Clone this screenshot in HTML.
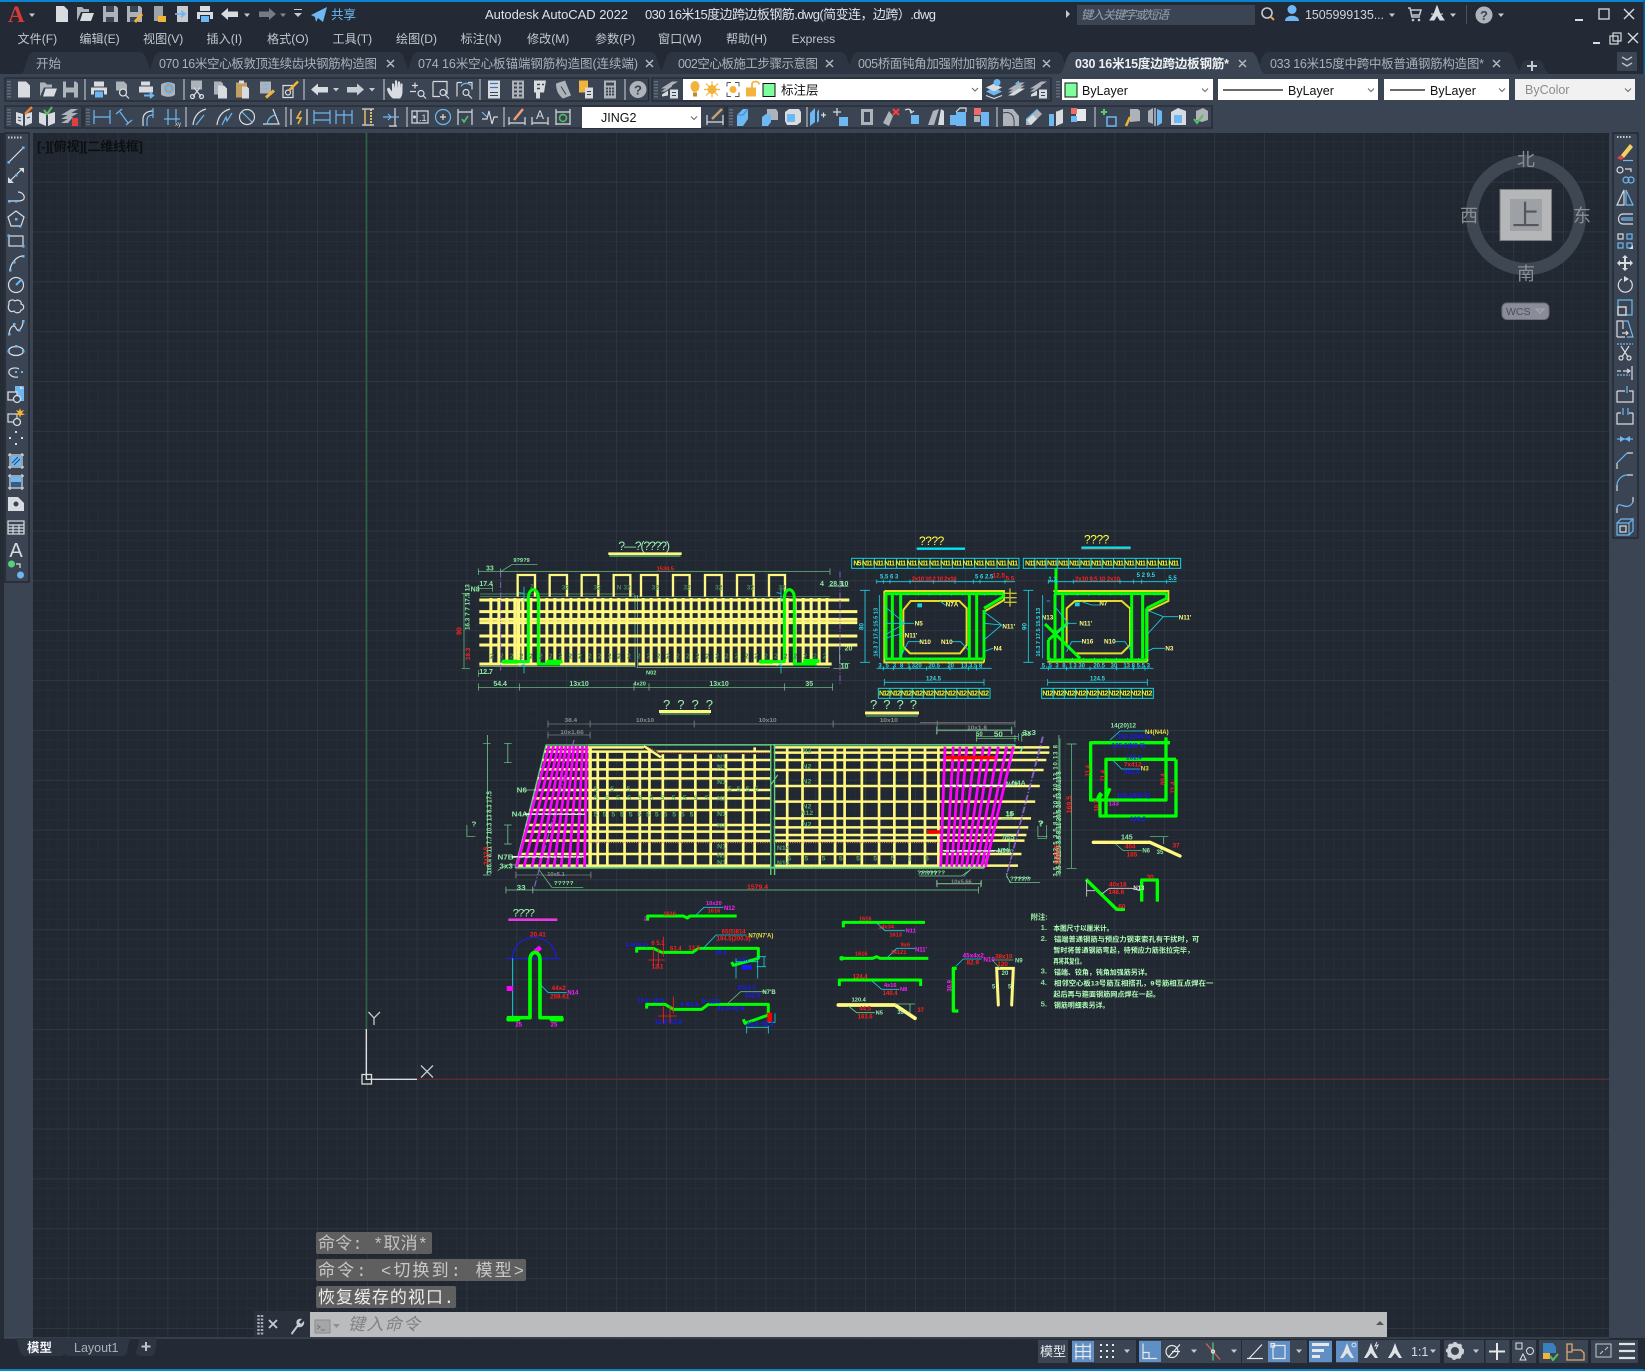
<!DOCTYPE html>
<html><head><meta charset="utf-8"><title>AutoCAD 2022</title>
<style>
html,body{margin:0;padding:0;background:#222933;overflow:hidden}
svg{display:block;font-family:"Liberation Sans","Noto Sans CJK SC",sans-serif}
.w{fill:none;stroke:#d8dce1;stroke-width:1.2}
.b{fill:none;stroke:#6db8f2;stroke-width:1.2}
.fw{fill:#d8dce1}.fb{fill:#6db8f2}.fg{fill:#aeb3ba}.fo{fill:#f2b33d}
.gr{fill:none;stroke:#00ff00;stroke-linejoin:round}
.ye{fill:none;stroke:#fff880}
.di{fill:none;stroke:#72cf8a;stroke-width:2}
.cy{fill:none;stroke:#18d0e0;stroke-width:2.5}
.gy{fill:none;stroke:#77797c;stroke-width:2.5}
.m{fill:#c2c7ce;font-size:12.1px}
.tb{fill:#aab1bb;font-size:12.5px}
</style></head><body>
<svg xmlns="http://www.w3.org/2000/svg" width="1645" height="1371" viewBox="0 0 1645 1371">
<defs>
<pattern id="grid" patternUnits="userSpaceOnUse" x="18.02" y="32.18" width="49.84" height="49.84">
<rect width="49.84" height="49.84" fill="#212831"/>
<path d="M9.97 0V49.84M19.94 0V49.84M29.9 0V49.84M39.87 0V49.84M0 9.97H49.84M0 19.94H49.84M0 29.9H49.84M0 39.87H49.84" stroke="#262d37" stroke-width="1" fill="none"/>
<path d="M0 0V49.84M0 0H49.84" stroke="#333b49" stroke-width="1.4" fill="none"/>
</pattern>
<g id="k"><path d="M-3-1.5h6L0 2z" fill="#c5cad0"/></g>
<g id="v"><path d="M-3-1.5L0 1.5 3-1.5" stroke="#666" fill="none"/></g>
<g id="n"><path class="fw" d="M-6-8h8l4 4V8H-6z"/></g>
<g id="o"><path class="fg" d="M-8 7V-7h5l2 2h5v3H-4z"/><path class="fw" d="M-5 7l2.5-8H9L6 7z"/></g>
<g id="s"><path class="fg" d="M-7-8H6l2 2V8H-7z"/><path fill="#3b4453" d="M-4-8h8v6h-8zM-4 3h8v5h-8z"/></g>
<g id="sa"><use href="#s"/><path d="M1 8L8 0" stroke="#f2b33d" stroke-width="3"/></g>
<g id="pl"><path class="fw" d="M-5-8H5v5H-5zM-8-2H8v7H5V1H-5v4h-3z"/><rect x="-4" y="2" width="8" height="6" class="fb"/></g>
<g id="pv"><path class="fg" d="M-6-8h8l3 3v6H-6z"/><circle cx="1" cy="3" r="3.5" fill="#3b4453" stroke="#d8dce1" stroke-width="1.3"/><path class="w" d="M3.5 5.500l3.500 3.500"/></g>
<g id="pb"><path class="fw" d="M-5-8H4v4h-9zM-7-3H7v6H-7z"/><path class="b" d="M-2 6H6M4 3.500L7 6 4 8.500" style="stroke-width:2"/></g>
<g id="gl"><path class="fg" d="M-7-5C-4-8 5-8 7-5V5C5 8-4 8-7 5z"/><circle r="5.500" cx="1" cy="-1" class="fb"/><circle r="3.500" cx="1" cy="-1" fill="none" stroke="#d98b3a" stroke-width="1.2"/></g>
<g id="cut"><rect x="-6" y="-9" width="11" height="9" class="fg"/><path class="w" d="M-3-2L4 7M3-2L-4 7"/><circle cx="-4.500" cy="7" r="2" class="w"/><circle cx="4.500" cy="7" r="2" class="w"/></g>
<g id="cp"><path class="fg" d="M-6-8H1l2 2V5H-6z"/><path class="fw" d="M-2-4H4l3 3V9H-2z"/></g>
<g id="pt"><rect x="-6" y="-7" width="11" height="15" fill="#c4a060"/><rect x="-3" y="-9" width="5" height="3" class="fw"/><path class="fw" d="M0-3H5l2 2V9H0z"/></g>
<g id="mp"><rect x="-6" y="-8" width="11" height="12" class="fg"/><path class="b" d="M-3-5h5M-3-1h5"/><path d="M0 8L8 1" stroke="#f2b33d" stroke-width="3"/></g>
<g id="bl"><path class="w" d="M-7-4H3V8H-7z"/><circle cx="-2" cy="3" r="2.500" class="w"/><path d="M-1 1L8-8" stroke="#f2b33d" stroke-width="2.500"/></g>
<g id="un"><path class="fw" d="M-9 0L-2-6v3.500H8V3H-2V6z"/></g>
<g id="re"><path class="fw" d="M9 0L2-6v3.500H-8V3H2V6z" opacity=".9"/></g>
<g id="ha"><path class="fw" d="M-3 9C-6 7-9 2-9-1L-7-2-4 2V-6L-2-6-1-1V-9H1L2-1V-8H4L4.500-1V-6H6.500V2C6.500 6 5 8 4 9z"/></g>
<g id="zr"><path class="w" d="M-3-7V-1M-6-4H0M-8 2H-2"/><circle cx="3" cy="4" r="3" class="w"/><path class="w" d="M5 6l3 3"/></g>
<g id="zw"><path class="w" d="M-8-8H6V5M-8-8V7H-1"/><circle cx="2" cy="3" r="3" class="w"/><path class="w" d="M4 5l4 4"/></g>
<g id="zp"><path class="w" d="M-8-7H-3M3-7H7V0M-8-7V7"/><path class="b" d="M-4-3C-2-7 3-7 6-4"/><circle cx="1" cy="3" r="3" class="w"/><path class="w" d="M3 5l4 4"/></g>
<g id="pr"><rect x="-6" y="-9" width="12" height="18" class="fw"/><path class="b" d="M-4-6H4M-4-2H4" style="stroke:#3a77b8"/><path d="M-4 3H4M-4 6H4" stroke="#3b4453"/></g>
<g id="dc"><rect x="-6" y="-9" width="12" height="18" class="fg"/><path d="M-4-6H-1M1-6H4M-4-2H-1M1-2H4M-4 2H-1M1 2H4M-4 6H-1M1 6H4" stroke="#3b4453" stroke-width="2"/></g>
<g id="tl"><path class="fw" d="M-6-9H6L4 3H0V9H-4V3H-6z"/><path d="M-3-5H0M2-5H4M-3-1H0" stroke="#3b4453" stroke-width="1.500"/></g>
<g id="sh"><path class="fg" d="M-7-6L2-9 8 6 0 9 Q-7 4-7-6z"/><path d="M-2-3L3 5" stroke="#3b4453"/></g>
<g id="ma"><rect x="-7" y="-9" width="9" height="12" class="fo"/><rect x="-1" y="-2" width="8" height="11" class="fw"/><path d="M1 2H5M1 5H5" stroke="#3b4453"/></g>
<g id="ca"><rect x="-6" y="-9" width="12" height="18" class="fg"/><rect x="-4" y="-7" width="8" height="3" fill="#3b4453"/><path d="M-4-1H4M-4 2H4M-4 5H4" stroke="#3b4453" stroke-dasharray="2 1" stroke-width="2"/></g>
<g id="he"><circle r="8.500" fill="#aeb3ba"/><text x="0" y="5" font-size="13" font-weight="bold" text-anchor="middle" fill="#3b4453">?</text></g>
<g id="la"><path class="fg" d="M-9-1L2-8H8L-3-1zM-9 2L2-5V-3L-5 2z"/><path class="fw" d="M-8 5L-2 1V6L-8 7z"/><rect x="0" y="0" width="8" height="9" class="fw"/><path d="M2 3H6M2 6H6" stroke="#3b4453"/></g>
<g id="lb"><path class="fb" d="M-8 2L0-2 8 2 0 6z" /><path class="fw" d="M-8-2L0-6 8-2 0 2z"/><circle cx="3" cy="-7" r="3.500" class="fb"/><path d="M-8 6L0 9 8 6" class="w"/></g>
<g id="lc"><path class="fg" d="M-9 0L2-7H8L-3 0z"/><path class="fg" d="M-9 3L2-4H8L-3 3z"/><path class="fb" d="M-2-6L2-9V-4z"/><path class="fw" d="M-9 6L2-1H8L-3 6z"/></g>
<g id="nt"><path class="fw" d="M-8-5L-1-3V9L-8 6zM1-3L8-5V6L1 9z"/><path d="M-6 0L-3 1M-6 3L-3 4M3 1L6 0" stroke="#3b4453"/><path d="M1-3L8-10" stroke="#f08030" stroke-width="2.500"/></g>
<g id="nt2"><path class="fw" d="M-8-5L-1-3V9L-8 6zM1-3L8-5V6L1 9z"/><path d="M-3-7L0-3 5-10" stroke="#55c060" stroke-width="2" fill="none"/></g>
<g id="lr"><path class="fg" d="M-9-2L1-8H8L-2-2zM-9 2L1-4H8L-2 2zM-9 6L1 0H3L-2 6z"/><rect x="2" y="1" width="6" height="8" fill="#e04040"/></g>
<g id="dl"><path class="b" d="M-8-7V7M8-7V7M-8 0H8"/></g>
<g id="da"><path class="b" d="M-8-3L-2-8M2 8L8 3"/><path class="b" d="M-4-5L4 6"/></g>
<g id="dar"><path class="w" d="M-7 9V2C-7-3-3-6 3-6"/><path class="b" d="M-3 9V3C-3 0-1-2 3-2M3-9V1"/></g>
<g id="dor"><path class="b" d="M-4-8V8M4-8V5M-8 2H8"/><text x="3" y="9" font-size="6" fill="#d8dce1">xy</text></g>
<g id="dra"><path class="w" d="M-8 8C-7-1-2-6 5-8"/><path class="b" d="M-5 8L3-2"/></g>
<g id="djo"><path class="w" d="M-8 8C-7-1-2-6 5-8"/><path class="b" d="M-3 8L1 0 2 4 7-4"/></g>
<g id="ddi"><circle r="7.500" class="w"/><path class="b" d="M-5-5L5 5"/></g>
<g id="dan"><path class="w" d="M-8 7H8L2-8"/><path class="b" d="M4-2C0-1-3 2-4 7"/></g>
<g id="dqu"><path class="w" d="M-8-8V8M8-8V8"/><path d="M2-6L-2 1H2L-1 7" stroke="#f2b33d" stroke-width="1.600" fill="none"/></g>
<g id="dba"><path class="b" d="M-8-7V7M8-7V7M-8-4H8M-8 3H8"/></g>
<g id="dco"><path class="b" d="M-8-7V7M0-7V7M8-7V7M-8-2H8"/></g>
<g id="dsp"><path class="w" d="M-6-8H6M-6 8H6"/><path d="M-3-8V8" stroke="#e0c060" stroke-width="1.500"/><path d="M3-8V8" stroke="#e0c060" stroke-width="2" stroke-dasharray="2 1"/></g>
<g id="dbr"><path class="w" d="M4-9V9M-2 9H6"/><path class="b" d="M-8 0H8M-3-3L0 0-3 3"/></g>
<g id="tol"><rect x="-8" y="-6" width="16" height="12" class="w"/><path class="w" d="M-3-6V6"/><circle cx="-5.500" cy="0" r="1.500" class="fw"/><text x="-1" y="4" font-size="9" fill="#d8dce1">.1</text></g>
<g id="cen"><circle r="7.500" class="b"/><path class="w" d="M-3 0H3M0-3V3"/></g>
<g id="ins"><path class="w" d="M-7-8V8M7-8V8M-7-5H7"/><path d="M-3 2L-1 5 3-1" stroke="#55c060" stroke-width="1.600" fill="none"/></g>
<g id="jog"><path class="w" d="M-8 2H-3L-1-6 2 7 4 0H8"/><path class="b" d="M-8-5L-3 0"/></g>
<g id="ded"><path class="w" d="M-8 0V8M8 0V8M-8 6H8"/><path d="M-3 3L6-8" stroke="#f0a070" stroke-width="2.500"/></g>
<g id="dte"><path class="w" d="M-8 0V8M8 0V8M-8 6H8"/><text x="0" y="2" font-size="12" text-anchor="middle" fill="#d8dce1">A</text></g>
<g id="dup"><path class="w" d="M-7-8V8M7-8V8M-7-5H7M-7 7H7"/><circle cx="0" cy="1" r="3.500" fill="none" stroke="#55c060" stroke-width="1.500"/></g>
<g id="dst"><path class="w" d="M-8-2V8M8-2V8M-8 5H8"/><path d="M-3 2L7-8" stroke="#c8a070" stroke-width="2.500"/></g>
<g id="c1"><path class="fb" d="M-8 9V-2L-2-8H3V2L-2 9z"/><path d="M-8-2H-2L3-8" stroke="#3f8bd0" fill="none"/></g>
<g id="c2"><path class="fg" d="M-3-8H6L8-5V3H0L-3 1z"/><path class="fb" d="M-8 9V0L-4-3H1V5L-2 9z"/></g>
<g id="c3"><path class="fw" d="M-4-8H6L8-5V5L4 8H-6L-8 4V-5z"/><rect x="-6" y="-3" width="8" height="8" class="fb"/></g>
<g id="c4"><path class="fb" d="M-8 9V-4L-3-9V5z"/><path class="fb" d="M-1 6V-5L1-8V4z"/><path class="w" d="M3-2H8M5.500-4.500V.5"/></g>
<g id="c5"><path class="w" d="M-8-5H0M-4-9V-1"/><rect x="-2" y="0" width="9" height="9" class="fb"/></g>
<g id="c6"><rect x="-6" y="-8" width="12" height="16" class="fg"/><rect x="-3" y="-5" width="6" height="10" fill="#3b4453"/></g>
<g id="c7"><path class="fg" d="M-8 6L-2-6 2-1-2 9z"/><path d="M2-8L8-2M8-8L2-2" stroke="#ff3b3b" stroke-width="2"/></g>
<g id="c8"><rect x="-1" y="-2" width="8" height="9" class="fb"/><path class="w" d="M-7-7C-3-9 0-7-1-4M-2-7l1 3 3-2"/></g>
<g id="c9"><path class="fg" d="M-8 8L-3-6 3-8-2 8z"/><path class="fw" d="M2 8L5-8 8-6V8z"/></g>
<g id="c10"><rect x="-2" y="-5" width="10" height="14" class="fb"/><rect x="-8" y="-2" width="9" height="10" class="fb"/><path d="M-2-5L2-9H8V-5" class="w"/></g>
<g id="c11"><rect x="-8" y="-9" width="7" height="7" fill="#ef6a6a"/><rect x="-1" y="-5" width="8" height="14" class="fb"/><rect x="-8" y="-1" width="6" height="6" class="fg"/></g>
<g id="c12"><path class="fg" d="M-8-8H2L8-1V9H-8z"/><path d="M-8-4C0-6 4-2 3 9" fill="none" style="stroke:#3b4453"/></g>
<g id="c13"><path class="fg" d="M-8 8V2L3-8 8-3-3 8z"/><path class="fw" d="M-8 2L-2-3 3 2-3 8z"/><path class="fb" d="M-8 2L3-8 4-7-7 3z"/></g>
<g id="c14"><rect x="-8" y="-3" width="5" height="12" class="fb"/><path class="fw" d="M-1 9V-5L6-8V6z"/><path d="M-1-5H6" class="w"/></g>
<g id="c15"><rect x="-3" y="-8" width="10" height="12" fill="#e8eaec"/><rect x="-8" y="-9" width="6" height="6" fill="#ef6a6a"/><rect x="-8" y="-1" width="6" height="6" class="fb"/></g>
<g id="c16"><path d="M-8-5H-2M-5-8V-2" stroke="#55d070" stroke-width="2"/><rect x="-2" y="0" width="9" height="9" fill="none" stroke="#6db8f2" stroke-width="1.500"/></g>
<g id="c17"><path class="fg" d="M-2-8H6L8-6V4L-2 5z"/><path d="M-6 9L-2 0" stroke="#f2b33d" stroke-width="2.500"/></g>
<g id="c18"><path class="fg" d="M-7-6L-2-9V7L-7 5z"/><path class="fb" d="M2-8L7-6V6L2 9z"/><path class="w" d="M0-9V9"/></g>
<g id="c19"><path class="fw" d="M-7-5L0-9 8-6V8H-7z"/><rect x="-4" y="-2" width="8" height="8" class="fb"/></g>
<g id="c20"><path class="fg" d="M-4-6L3-9 8-6V3L2 5-4 3z"/><path d="M-6 2L-3 6 3-2" stroke="#55c060" stroke-width="2" fill="none"/></g>
<g id="l1"><path class="w" d="M-7 7L7-7"/><rect x="-8.500" y="6" width="2.500" height="2.500" class="fb"/><rect x="6" y="-8.500" width="2.500" height="2.500" class="fb"/></g>
<g id="l2"><path class="w" d="M-7 7L7-7"/><path class="fw" d="M3-7H8V-2zM-8 8V2L-2 8z"/><rect x="-1" y="-1" width="2.500" height="2.500" class="fb"/></g>
<g id="l3"><path class="w" d="M-6 4H2C7 4 9 2 8-1S4-5 2-5" /><rect x="-8" y="3" width="2.500" height="2.500" class="fb"/><rect x="-1" y="3" width="2.500" height="2.500" class="fb"/></g>
<g id="l4"><path class="w" d="M0-8L8-2 5 7H-5L-8-2z"/><rect x="-1" y="-1" width="2.500" height="2.500" class="fb"/><rect x="3" y="6" width="2.500" height="2.500" class="fb"/></g>
<g id="l5"><rect x="-7" y="-5" width="14" height="10" class="w"/><rect x="-8.500" y="-6.500" width="2.500" height="2.500" class="fb"/><rect x="6" y="4" width="2.500" height="2.500" class="fb"/></g>
<g id="l6"><path class="w" d="M-6 7C-5 0 0-6 6-7"/><rect x="-7" y="6" width="2.500" height="2.500" class="fb"/><rect x="6" y="-8" width="2.500" height="2.500" class="fb"/><rect x="-3" y="-2" width="2.500" height="2.500" class="fb"/></g>
<g id="l7"><circle r="7.500" class="w"/><path class="b" d="M0 0L5-5" style="stroke-width:2"/><rect x="4" y="-6" width="2.500" height="2.500" class="fb"/></g>
<g id="l8"><path class="w" d="M-7-3C-8-7-3-8-1-6 2-8 6-6 5-3 9-2 8 3 5 3 4 7-1 6-2 4-6 6-9 2-7-3z"/></g>
<g id="l9"><path class="w" d="M-7 6C-6-2-2-4 0 0S3 3 5 0 7-5 7-7"/><rect x="-8" y="5" width="2.500" height="2.500" class="fb"/><rect x="-3" y="-5" width="2.500" height="2.500" class="fb"/><rect x="2" y="1" width="2.500" height="2.500" class="fb"/><rect x="6" y="-8" width="2.500" height="2.500" class="fb"/></g>
<g id="l10"><ellipse rx="7.500" ry="4.500" class="w"/><rect x="-8.500" y="-1" width="2.500" height="2.500" class="fb"/><rect x="6" y="-1" width="2.500" height="2.500" class="fb"/><rect x="-1" y="-6" width="2.500" height="2.500" class="fb"/></g>
<g id="l11"><path class="w" d="M2 5C-4 6-8 2-7-1S0-5 3-3"/><rect x="-1" y="-1" width="2" height="2" class="fb"/><rect x="5" y="-1" width="2" height="2" class="fb"/></g>
<g id="l12"><rect x="-1" y="-9" width="9" height="15" class="fb"/><path class="fw" d="M4-9L8-6H4z"/><rect x="-8" y="-3" width="9" height="8" fill="#3b4453" stroke="#d8dce1" stroke-width="1.300"/><circle cx="1" cy="4" r="3.500" fill="#3b4453" stroke="#d8dce1" stroke-width="1.300"/></g>
<g id="l13"><rect x="-8" y="-3" width="9" height="8" class="w"/><circle cx="1" cy="5" r="3.500" fill="#3b4453" stroke="#d8dce1" stroke-width="1.300"/><path class="fo" d="M4-9L5-6 8-7 6-4 9-2 5-2 4 1 3-2-1-2 2-4 0-7 3-6z"/></g>
<g id="l14"><rect x="-1" y="-7" width="2" height="2" class="fw"/><rect x="-7" y="-1" width="2" height="2" class="fw"/><rect x="5" y="-1" width="2" height="2" class="fw"/><rect x="-1" y="5" width="2" height="2" class="fw"/></g>
<g id="l15"><path class="w" d="M-8-6H8M-8 6H8M-6-8V8M6-8V8"/><rect x="-5" y="-5" width="10" height="10" class="fb"/><path d="M-4 2L2-4M-2 4L4-2" stroke="#1f4a77"/></g>
<g id="l16"><path class="w" d="M-8-6H8M-8 6H8M-6-8V8M6-8V8"/><rect x="-5" y="-5" width="10" height="10" fill="#6db8f2"/><rect x="-5" y="0" width="10" height="5" fill="#3a5a80"/></g>
<g id="l17"><path class="fw" d="M-8-7H2L8-1V7H-8z"/><circle cx="0" cy="0" r="2.500" fill="#3b4453"/></g>
<g id="l18"><rect x="-8" y="-6" width="16" height="13" class="w"/><path class="w" d="M-8-2H8M-8 1H8M-8 4H8M-3-2V7M3-2V7"/></g>
<g id="l19"><text y="9" x="0" text-anchor="middle" font-size="20" fill="#d8dce1">A</text></g>
<g id="l20"><circle cx="-4.500" cy="-6" r="3.500" fill="#55d27a"/><circle cx="4.500" cy="5" r="3.500" class="fb"/><path class="w" d="M0-6H4V-2"/></g>
<g id="r1"><path fill="#f5cf60" d="M-4 3L5-8 8-5-1 6z"/><path d="M-8 6L-4 3-1 6-4 8z" fill="#e04848"/><path class="b" d="M-2 8.500H8"/></g>
<g id="r2"><circle cx="-5" cy="-5" r="3" class="w"/><path class="w" d="M0-6H6V-3"/><circle cx="1" cy="5" r="3" class="b"/><circle cx="6" cy="5" r="3" class="b"/></g>
<g id="r3"><path class="w" d="M-8 7L-1-8V7z"/><path class="b" d="M8 7L1-8V7z"/></g>
<g id="r4"><path class="w" d="M8 5H-2C-8 5-8-5-2-5H8"/><path class="b" d="M8 1H-2C-4 1-4-1-2-1H8"/></g>
<g id="r5"><rect x="-7" y="-7" width="5" height="5" class="w"/><rect x="2" y="-7" width="5" height="5" class="b"/><rect x="-7" y="2" width="5" height="5" class="b"/><rect x="2" y="2" width="5" height="5" class="b"/><path class="fw" d="M8 4V8H4z"/></g>
<g id="r6"><path class="fw" d="M0-8L3-5H1V-1H5V-3L8 0 5 3V1H1V5H3L0 8-3 5H-1V1H-5V3L-8 0-5-3V-1H-1V-5H-3z"/></g>
<g id="r7"><path class="w" d="M-3-6A7 7 0 1 0 5-5"/><path class="fw" d="M-1-9L4-6-1-3z"/></g>
<g id="r8"><rect x="-7" y="-7" width="14" height="15" class="b"/><rect x="-7" y="0" width="8" height="8" fill="#3b4453" stroke="#d8dce1" stroke-width="1.400"/></g>
<g id="r9"><path class="w" d="M-8 8V-8H-2V0M-8 8H0"/><path class="b" d="M-1-8H3L8 8H2"/><path class="w" d="M-3 4H3M1 2L3 4 1 6"/></g>
<g id="r10"><path class="b" stroke-dasharray="2 1" d="M-8-8H8"/><path class="w" d="M-4-6L3 5M4-6L-3 5"/><circle cx="-4" cy="6" r="2" class="w"/><circle cx="4" cy="6" r="2" class="w"/></g>
<g id="r11"><path class="w" d="M7-7V7"/><path class="w" d="M-2-2H5M2-4L5-2 2 0"/><path class="b" stroke-dasharray="2 1" d="M-8 2H5"/><path class="w" d="M-8-2H-4"/></g>
<g id="r12"><path class="w" d="M-8-4H0M4-4H8V7H-8V-4"/><path class="b" d="M2-9V-2"/></g>
<g id="r13"><path class="w" d="M-8-4V7H8V-4M-8-4H-4M4-4H8"/><path class="b" d="M-2-9V-2M3-9V-2"/></g>
<g id="r14"><path class="b" d="M-8 0H8"/><path class="fb" d="M-5-3L0 0-5 3zM5-3L0 0 5 3z"/></g>
<g id="r15"><path class="w" d="M-8 8V2M2-8H8"/><path class="b" d="M-8 2L2-8"/></g>
<g id="r16"><path class="w" d="M-8 8V2M2-8H8"/><path class="b" d="M-8 2C-8-3-3-8 2-8"/></g>
<g id="r17"><path class="w" d="M-8 8V3M8-8V-3"/><path class="b" d="M-8 3C-7-6 2 8 8-3"/></g>
<g id="r18"><path class="b" d="M-8-4H4V8H-8zM4-4L8-8V4L4 8M-8-4L-4-8H8"/><rect x="-5" y="-1" width="6" height="6" class="w"/></g>
</defs>

<rect width="1645" height="1371" fill="#232a35"/>
<rect width="1645" height="2" fill="#0a84cf"/>
<rect y="1369" width="1645" height="2" fill="#0a84cf"/>
<rect x="1643.500" y="0" width="1.500" height="1371" fill="#0a5f96"/>

<!-- title bar -->
<text x="8" y="22" font-size="23" font-weight="bold" fill="#d43a3a" style="font-family:'Liberation Serif',serif">A</text>
<use href="#k" x="32" y="15"/>
<use href="#n" x="62" y="14"/><use href="#o" x="85" y="14"/><use href="#s" x="110" y="14"/><use href="#sa" x="134" y="14"/>
<g transform="translate(159 14)"><rect x="-5" y="-8" width="9" height="15" fill="#9ea3aa"/><rect x="-1" y="2" width="8" height="6" class="fo"/></g>
<g transform="translate(182 14)"><rect x="-5" y="-8" width="11" height="16" fill="#c7cbd0"/><path d="M-7 0H2M-1-3L3 0-1 3" stroke="#6db8f2" stroke-width="1.800" fill="none"/></g>
<use href="#pl" x="205" y="14"/><use href="#un" x="230" y="14"/><use href="#k" x="247" y="15"/>
<use href="#re" x="267" y="14" opacity=".5"/><use href="#k" x="283" y="15" opacity=".6"/>
<path d="M294 13h8l-4 4z" fill="#c5cad0" stroke="none"/><path d="M294 9.500h8" stroke="#c5cad0"/>
<path d="M311 15L327 7 323 22 318 18 316 22 315 17z" fill="#6db8f2"/>
<text x="331" y="19" font-size="12.500" fill="#6db8f2" textLength="25">共享</text>
<text x="485" y="19" font-size="13" fill="#dfe3e8" textLength="143">Autodesk AutoCAD 2022</text>
<text x="645" y="19" font-size="13" fill="#dfe3e8" textLength="291">030 16米15度边跨边板钢筋.dwg(简变连，边跨）.dwg</text>
<path d="M1066 10v8l4-4z" fill="#c5cad0"/>
<rect x="1077" y="5" width="178" height="20" fill="#3b4453"/>
<text x="1081" y="19" font-size="12" font-style="italic" fill="#9aa2ae" textLength="88">键入关键字或短语</text>
<circle cx="1267" cy="13" r="5" fill="none" stroke="#c5cad0" stroke-width="1.600"/><path d="M1270.500 16.500L1274 20" stroke="#e0a050" stroke-width="2"/>
<circle cx="1292" cy="9.500" r="4.500" fill="#6db8f2"/><path d="M1285 21C1285 14 1299 14 1299 21z" fill="#6db8f2"/>
<text x="1305" y="19" font-size="12.500" fill="#d0d5db" textLength="79">1505999135...</text>
<use href="#k" x="1392" y="15"/>
<path d="M1408 8h2l2 9h8M1411 10h10l-1.500 5h-7" fill="none" stroke="#c5cad0" stroke-width="1.500"/><circle cx="1413" cy="20" r="1.300" fill="#c5cad0"/><circle cx="1419" cy="20" r="1.300" fill="#c5cad0"/>
<path d="M1437 6l3 8 4 6h-4l-3-5-3 5h-4l4-6zM1431 14h12" fill="#d8dce1" stroke="#d8dce1"/><use href="#k" x="1453" y="15"/>
<rect x="1466" y="5" width="1" height="19" fill="#4a5362"/>
<use href="#he" x="1484" y="15"/><use href="#k" x="1501" y="15"/>
<path d="M1575 20h8" stroke="#d8dce1" stroke-width="2"/><rect x="1599" y="9" width="10" height="10" fill="none" stroke="#d8dce1" stroke-width="1.300"/><path d="M1624 9l10 10M1634 9l-10 10" stroke="#d8dce1" stroke-width="1.400"/>

<!-- menu -->
<text class="m" x="17.500" y="43">文件(F)</text><text class="m" x="79.400" y="43">编辑(E)</text><text class="m" x="143" y="43">视图(V)</text><text class="m" x="206.500" y="43">插入(I)</text><text class="m" x="267" y="43">格式(O)</text><text class="m" x="332.500" y="43">工具(T)</text><text class="m" x="396" y="43">绘图(D)</text><text class="m" x="460.500" y="43">标注(N)</text><text class="m" x="527" y="43">修改(M)</text><text class="m" x="595" y="43">参数(P)</text><text class="m" x="658" y="43">窗口(W)</text><text class="m" x="726" y="43">帮助(H)</text><text class="m" x="791.500" y="43">Express</text>
<path d="M1593 43h7" stroke="#d8dce1" stroke-width="2"/><rect x="1610" y="36" width="8" height="8" fill="none" stroke="#d8dce1" stroke-width="1.200"/><rect x="1613" y="33" width="8" height="8" fill="none" stroke="#d8dce1" stroke-width="1.200"/><path d="M1628 33l10 10M1638 33l-10 10" stroke="#d8dce1" stroke-width="1.400"/>

<!-- toolbars bg -->
<rect y="74" width="1645" height="59" fill="#3b4453"/>
<!-- tabs -->
<g fill="#2d3542">
<path d="M20 74C26 74 26 52 34 52H140C148 52 148 74 154 74z"/>
<path d="M146 74C152 74 152 52 160 52H398C406 52 406 74 412 74z"/>
<path d="M404 74C410 74 410 52 418 52H651C659 52 659 74 665 74z"/>
<path d="M658 74C664 74 664 52 672 52H841C849 52 849 74 855 74z"/>
<path d="M844 74C850 74 850 52 858 52H1057C1065 52 1065 74 1071 74z"/>
<path d="M1254 74C1260 74 1260 52 1268 52H1508C1515 52 1516 74 1524 74z"/>
<path d="M1519 74C1521 66 1522 60 1526 60H1538C1544 60 1544 72 1548 72V74z"/>
</g>
<path d="M1059 74C1065 74 1065 52 1073 52H1251C1259 52 1259 74 1265 74z" fill="#3b4453"/>
<rect x="1617" y="52" width="20" height="19" fill="#3b4453"/>
<path d="M1622 57l5 3 5-3M1622 63l5 3 5-3" fill="none" stroke="#b8bdc4" stroke-width="1.500"/>
<path d="M1532 61v10M1527 66h10" stroke="#c5cad0" stroke-width="2"/>
<text class="tb" x="36" y="68">开始</text>
<text class="tb" x="159" y="68" textLength="218">070 16米空心板敦顶连续齿块钢筋构造图</text>
<text class="tb" x="418" y="68" textLength="220">074  16米空心板锚端钢筋构造图(连续端)</text>
<text class="tb" x="678" y="68" textLength="140">002空心板施工步骤示意图</text>
<text class="tb" x="858" y="68" textLength="178">005桥面钝角加强附加钢筋构造图</text>
<text x="1075" y="68" font-size="12.500" font-weight="bold" fill="#eef1f4" textLength="154">030 16米15度边跨边板钢筋*</text>
<text class="tb" x="1270" y="68" textLength="214">033 16米15度中跨中板普通钢筋构造图*</text>
<g stroke="#b3b8bf" stroke-width="1.500"><path d="M387 60l7 7M394 60l-7 7M646 60l7 7M653 60l-7 7M826 60l7 7M833 60l-7 7M1043 60l7 7M1050 60l-7 7M1239 60l7 7M1246 60l-7 7M1493 60l7 7M1500 60l-7 7"/></g>

<!-- toolbar groups -->
<g fill="none" stroke="#242b35" stroke-width="1.300">
<rect x="5" y="78" width="643.500" height="23"/><rect x="652" y="78" width="399" height="23"/>
<rect x="5" y="106" width="77" height="22"/><rect x="84" y="106" width="641" height="22"/><rect x="727" y="106" width="485" height="22"/>
</g>
<g stroke="#d0d4d9" stroke-width="1"><path d="M85 79v21M184 79v21M304 79v21M384 79v21M480 79v21M625 79v21M186 107v20M286 107v20M407 107v20M504 107v20M807 107v20M997 107v20M1095 107v20"/></g>
<path d="M8 81v18M10 81v18M655 81v18M657 81v18M1057 81v18M1059 81v18M8 109v16M10 109v16M87 109v16M89 109v16M730 109v16M732 109v16" stroke="#8c94a0" stroke-dasharray="1.500 1.500"/>
<!-- row 1 -->
<g transform="translate(0 89.500)">
<use href="#n" x="24"/><use href="#o" x="48"/><use href="#s" x="70"/><use href="#pl" x="99"/><use href="#pv" x="122"/><use href="#pb" x="146"/><use href="#gl" x="168"/>
<use href="#cut" x="197"/><use href="#cp" x="220"/><use href="#pt" x="242"/><use href="#mp" x="266"/><use href="#bl" x="290"/>
<use href="#un" x="320"/><use href="#k" x="336"/><use href="#re" x="355"/><use href="#k" x="372"/>
<use href="#ha" x="396"/><use href="#zr" x="418"/><use href="#zw" x="441"/><use href="#zp" x="465"/>
<use href="#pr" x="494"/><use href="#dc" x="518"/><use href="#tl" x="540"/><use href="#sh" x="563"/><use href="#ma" x="586"/><use href="#ca" x="610"/><use href="#he" x="638"/><use href="#la" x="670"/>
<use href="#lb" x="994"/><use href="#lc" x="1017"/><use href="#la" x="1039"/>
</g>
<rect x="683" y="79" width="299" height="21" fill="#fff"/>
<g transform="translate(0 89.500)">
<ellipse cx="695" cy="-3" rx="4.500" ry="5.500" class="fo"/><rect x="693" y="3" width="4" height="4" fill="#c08a20"/>
<circle cx="712" r="4.500" class="fo"/><path d="M712-8V8M704 0H720M706-6L718 6M718-6L706 6" stroke="#f2b33d" stroke-width="1.200"/>
<path d="M727-7H731M735-7H739V-3M727-7V-3M727 3V7H731M739 3V7H735" fill="none" stroke="#555" /><circle cx="733" r="3.500" class="fo"/>
<rect x="746" y="-2" width="10" height="9" class="fo"/><path d="M752-2V-5C752-9 759-9 759-5" fill="none" stroke="#f2b33d" stroke-width="1.800"/>
<rect x="763" y="-6" width="12" height="13" fill="#7dff9d" stroke="#111"/>
<text x="781" y="5" font-size="12.500" fill="#111">标注层</text>
<use href="#v" x="975" y="0"/>
</g>
<rect x="1062" y="79" width="151" height="21" fill="#fff"/><rect x="1218" y="79" width="160" height="21" fill="#fff"/><rect x="1384" y="79" width="125" height="21" fill="#fff"/><rect x="1515" y="79" width="120" height="21" fill="#f1f1f1"/>
<rect x="1065" y="83" width="12" height="14" fill="#7dff9d" stroke="#111"/>
<text x="1082" y="95" font-size="12.500" fill="#111">ByLayer</text>
<path d="M1223 90h60M1390 90h35" stroke="#111" stroke-width="1.200"/>
<text x="1288" y="95" font-size="12.500" fill="#111">ByLayer</text>
<text x="1430" y="95" font-size="12.500" fill="#111">ByLayer</text>
<text x="1525" y="94" font-size="12.500" fill="#8c8c8c">ByColor</text>
<use href="#v" x="1205" y="90"/><use href="#v" x="1371" y="90"/><use href="#v" x="1502" y="90"/><use href="#v" x="1628" y="90"/>
<!-- row 2 -->
<g transform="translate(0 117)">
<use href="#nt" x="24"/><use href="#nt2" x="47"/><use href="#lr" x="70"/>
<use href="#dl" x="102"/><use href="#da" x="124"/><use href="#dar" x="150"/><use href="#dor" x="172"/>
<use href="#dra" x="201"/><use href="#djo" x="225"/><use href="#ddi" x="247"/><use href="#dan" x="271"/>
<use href="#dqu" x="299"/><use href="#dba" x="322"/><use href="#dco" x="344"/><use href="#dsp" x="368"/><use href="#dbr" x="391"/>
<use href="#tol" x="420"/><use href="#cen" x="443"/><use href="#ins" x="465"/><use href="#jog" x="490"/>
<use href="#ded" x="517"/><use href="#dte" x="540"/><use href="#dup" x="563"/><use href="#dst" x="715"/>
<use href="#c1" x="745"/><use href="#c2" x="770"/><use href="#c3" x="793"/><use href="#c4" x="818"/><use href="#c5" x="841"/><use href="#c6" x="867"/><use href="#c7" x="891"/><use href="#c8" x="912"/><use href="#c9" x="936"/><use href="#c10" x="958"/><use href="#c11" x="982"/>
<use href="#c12" x="1011"/><use href="#c13" x="1034"/><use href="#c14" x="1057"/><use href="#c15" x="1079"/>
<use href="#c16" x="1109"/><use href="#c17" x="1132"/><use href="#c18" x="1155"/><use href="#c19" x="1178"/><use href="#c20" x="1200"/>
</g>
<rect x="582" y="107" width="119" height="21" fill="#fff"/>
<text x="601" y="122" font-size="12.500" fill="#111">JING2</text><use href="#v" x="694" y="118"/>

<!-- side strips -->
<rect x="0" y="133" width="4" height="1205" fill="#252c36"/>
<rect x="4" y="133" width="29" height="1205" fill="#3b4453"/>
<rect x="1609" y="133" width="36" height="1205" fill="#3b4453"/>
<rect x="5" y="133" width="24" height="449" fill="#3b4453" stroke="#20262f" stroke-width="1.300"/>
<rect x="1613" y="133" width="25" height="405" fill="#3b4453" stroke="#20262f" stroke-width="1.300"/>
<path d="M8 137.500h14M1617 137h14" stroke="#c5cad0" stroke-width="2" stroke-dasharray="1.500 1.500"/>
<g transform="translate(16 0)"><use href="#l1" y="155"/><use href="#l2" y="175"/><use href="#l3" y="197"/><use href="#l4" y="219"/><use href="#l5" y="241"/><use href="#l6" y="263"/><use href="#l7" y="285"/><use href="#l8" y="307"/><use href="#l9" y="328"/><use href="#l10" y="351"/><use href="#l11" y="372"/><use href="#l12" y="395"/><use href="#l13" y="417"/><use href="#l14" y="438"/><use href="#l15" y="461"/><use href="#l16" y="482"/><use href="#l17" y="504"/><use href="#l18" y="527"/><use href="#l19" y="548"/><use href="#l20" y="570"/></g>
<g transform="translate(1625 0)"><use href="#r1" y="152"/><use href="#r2" y="175"/><use href="#r3" y="198"/><use href="#r4" y="219"/><use href="#r5" y="241"/><use href="#r6" y="263"/><use href="#r7" y="285"/><use href="#r8" y="307"/><use href="#r9" y="329"/><use href="#r10" y="352"/><use href="#r11" y="373"/><use href="#r12" y="395"/><use href="#r13" y="417"/><use href="#r14" y="439"/><use href="#r15" y="461"/><use href="#r16" y="483"/><use href="#r17" y="505"/><use href="#r18" y="527"/></g>

<!-- canvas -->
<rect x="33" y="133" width="1576" height="1205" fill="url(#grid)"/>
<path d="M366.300 133V1029" stroke="#2b6a3d" stroke-width="1.300"/>
<path d="M417 1079.300H1609" stroke="#5c2c33" stroke-width="1.300"/>
<text x="37" y="151" font-size="13" font-weight="bold" fill="#0c0f14" textLength="106">[-][俯视][二维线框]</text>

<!-- UCS -->
<path d="M366.300 1029V1079.300H417" fill="none" stroke="#dcdcdc" stroke-width="1.400"/>
<rect x="362" y="1074.500" width="9.500" height="9.500" fill="none" stroke="#dcdcdc" stroke-width="1.300"/>
<path d="M368.500 1012L374 1018 380 1012M374 1018V1025M421 1065.500L433 1077.500M433 1065.500L421 1077.500" fill="none" stroke="#c8c8c8" stroke-width="1.300"/>

<!-- navcube -->
<circle cx="1526" cy="215" r="54" fill="none" stroke="#3f4752" stroke-width="12.500"/>
<rect x="1500" y="189.500" width="51.500" height="51" fill="#b5b6b8" stroke="#7c7c7c"/>
<rect x="1510" y="199" width="32" height="32" fill="#9da1a5"/>
<text x="1526" y="225" font-size="28" text-anchor="middle" fill="#54585c">上</text>
<g font-size="18" fill="#8b8e92" text-anchor="middle"><text x="1526" y="166">北</text><text x="1526" y="280">南</text><text x="1469" y="222">西</text><text x="1582" y="222">东</text></g>
<rect x="1502" y="303" width="47" height="16.500" rx="5" fill="#8a8c99" stroke="#6c6e78"/>
<text x="1506" y="315" font-size="10.500" fill="#4b4d56">WCS</text><path d="M1536 309h8l-4 4z" fill="none" stroke="#a8aab4"/>

<!-- Drawing A -->
<g transform="translate(450 530) scale(.33333)" font-weight="bold">
<text x="505" y="60" font-size="36" font-weight="normal" fill="#9cf0b0" textLength="155">?—?(????)</text>
<path d="M475 71H695" class="ye" stroke-width="8"/><path d="M478 78H692" stroke="#5fc47a" stroke-width="4"/>
<path class="di" d="M152 125L185 104H262M85 125H1140M85 115V135M1140 115V135M152 115V135M85 175H128M85 165V185M128 165V185M42 190V415M35 190H60M35 415H60M85 472H1148M85 460V482M208 460V482M552 460V482M597 460V482M1003 460V482M1148 460V482M85 430H122M85 420V440M1135 170H1195M1168 350V400H1200M1150 415H1195" />
<g fill="#8de8a4" font-size="21"><text x="190" y="96" font-size="17">9?9?9</text><text x="108" y="122">33</text><text x="88" y="168">17.4</text><text x="62" y="185">N8</text><text x="130" y="468">54.4</text><text x="358" y="468">13x10</text><text x="550" y="466" font-size="17">4x20</text><text x="778" y="468">13x10</text><text x="1066" y="468">35</text><text x="88" y="432">12.7</text><text x="588" y="433" font-size="17">N02</text><text x="1110" y="168">4</text><text x="1138" y="168">28.5</text><text x="1172" y="168">10</text><text x="1184" y="362">20</text><text x="1172" y="415">10</text>
<text font-size="19" transform="translate(58 300) rotate(-90)">16.3  7  7  17.5  13</text></g>
<path d="M90 200H1140M90 192H555" stroke="#72cf8a" stroke-width="2" opacity=".7"/>
<path d="M88 410H555M560 412H1140M555 195V412M562 195V412" stroke="#8fd8a0" stroke-width="2"/>
<g stroke="#fff880" fill="none" stroke-width="9">
<line x1="118" x2="535" y1="305" y2="305" stroke-width="202" stroke-dasharray="9 15"/>
<line x1="575" x2="1135" y1="305" y2="305" stroke-width="202" stroke-dasharray="9 15"/>
<path d="M88 210H1198M88 245H1222M88 268H1222M88 278H1222M88 318H1222M88 345H1222M88 402H555M565 402H1145"/>
<path d="M203 200V135H255V200M299 200V135H351V200M395 200V135H445V200M491 200V135H541V200M573 200V135H623V200M669 200V135H719V200M765 200V135H815V200M861 200V135H911V200M957 200V135H1005V200" stroke-width="7"/>
<path d="M205 205V402" stroke-width="12"/>
</g>
<path d="M165 395H235V205C235 170 265 170 265 205V402H330M935 395H1003V205C1003 170 1033 170 1033 205V402H1100" class="gr" stroke-width="9"/>
<path d="M160 395H200M295 395H332M932 395H965M1065 393H1103" stroke="#00ff00" stroke-width="12" stroke-linecap="round"/>
<path d="M152 125V425M1170 125V465" stroke="#8a5fc0" stroke-width="3" stroke-dasharray="18 5 3 5"/>
<path d="M222 170V215M222 390V430M993 170V215M993 390V430M207 188L220 190M980 188L992 190M208 408L222 404M980 408L992 404" class="cy"/>
<text x="620" y="122" font-size="17" fill="#ff2020">1534.5</text>
<text font-size="21" fill="#ff2020" transform="translate(35 315) rotate(-90)">90</text>
<text font-size="19" fill="#ff2020" transform="translate(60 390) rotate(-90)">16.3</text>
<g fill="#3d8a50" font-size="20"><text x="240" y="175">2</text><text x="335" y="178">32</text><text x="430" y="178">32</text><text x="500" y="178">N 32</text><text x="605" y="178">32</text><text x="700" y="178">32</text><text x="795" y="178">32</text><text x="890" y="178">32</text><text x="985" y="178">32</text>
<text x="120" y="385" font-size="21" textLength="1010">2 2 2 2 2 2 2 2 2 2 2 2 2 2 2 2 2 2 2 2 2 2 2 2 2 2 2 2 2 2 2 2 2 2 2</text></g>
</g>
<g fill="#9cf0b0" font-size="13"><text x="663" y="709" textLength="50">? ? ? ?</text><text x="870" y="709" textLength="47">? ? ? ?</text></g>
<path d="M659 711.500H711M865 713H919" stroke="#fff880" stroke-width="3"/><path d="M660 714H710M866 716H918" stroke="#5fc47a"/>

<!-- Section B -->
<g transform="translate(840 525) scale(.33333)" font-weight="bold">
<text x="237" y="60" font-size="36" font-weight="normal" fill="#ffff40" textLength="76">????</text>
<text x="732" y="56" font-size="36" font-weight="normal" fill="#ffff40" textLength="76">????</text>
<path d="M230 71H375M724 68H872" stroke="#00e8f0" stroke-width="7"/><path d="M724 73H872" stroke="#e02020" stroke-width="2"/>
<g fill="#152a30" stroke="#18d0e0" stroke-width="3">
<rect x="35" y="100" width="502" height="30"/><rect x="550" y="100" width="472" height="30"/><rect x="115" y="490" width="335" height="30"/><rect x="605" y="490" width="335" height="30"/></g>
<g stroke="#18d0e0" stroke-width="30"><line x1="68" x2="537" y1="115" y2="115" stroke-dasharray="3 30.470"/><line x1="583" x2="1022" y1="115" y2="115" stroke-dasharray="3 30.700"/><line x1="148" x2="450" y1="505" y2="505" stroke-dasharray="3 30.500"/><line x1="638" x2="940" y1="505" y2="505" stroke-dasharray="3 30.500"/></g>
<g fill="#f5f528" font-size="21" font-weight="bold">
<text x="40" y="122" textLength="494">N5 N11 N11 N11 N11 N11 N11 N11 N11 N11 N11 N11 N11 N11 N11</text>
<text x="555" y="122" textLength="462">N11 N11 N11 N11 N11 N11 N11 N11 N11 N11 N11 N11 N11 N11</text>
<text x="117" y="512" textLength="330">N12 N12 N12 N12 N12 N12 N12 N12 N12 N12</text>
<text x="607" y="512" textLength="330">N12 N12 N12 N12 N12 N12 N12 N12 N12 N12</text></g>
<path stroke-width="6" fill="none" d="M133 198V412H432M133 198H492V225L432 260V412M190 255L212 228H358L380 250V360L360 385H210L190 365Z" style="stroke:#e4dc22"/>
<g class="gr" stroke-width="9"><path d="M135 206H490M135 402H432M138 206V402M157 206V400M182 206V400M388 206V400M410 206V400M432 255V402M432 250L490 215V206"/></g>
<path d="M182 400L190 365" stroke="#00ff00" stroke-width="6"/>
<path stroke="#e4dc22" stroke-width="6" fill="none" d="M640 198H985V228L922 258V410M622 410H922M680 250L705 228H845L870 250V360L845 385H705L680 360Z"/>
<g class="gr" stroke-width="9"><path d="M642 206H980M626 405H920M645 206V400M668 206V400M875 206V400M908 206V400M920 250V402M920 250L980 220V206M648 130V206"/><path d="M615 297L720 400M625 345L682 295M625 345V405"/></g>
<path class="cy" d="M135 245L195 295H222M135 330L195 295M135 295H195M135 340L190 325M182 395L205 350H240M385 375L362 350H335M300 228L315 240H320M432 295L485 300M432 345L485 300M432 260L485 300M432 380L458 370H460M620 228H630M725 230L755 240H780M645 245L685 295H710M645 330L685 295M680 380L695 350H725M875 380L855 350H825M920 380L940 370H975M920 255L970 275H1015M920 330L970 275"/>
<g fill="#ffff80" font-size="19" font-weight="bold"><text x="224" y="302">N5</text><text x="194" y="338">N11'</text><text x="238" y="357">N10</text><text x="303" y="357">N10</text><text x="317" y="245">N7A</text><text x="487" y="310">N11'</text><text x="461" y="377">N4</text><text x="605" y="283">N13</text><text x="718" y="302">N11'</text><text x="725" y="356">N16</text><text x="792" y="356">N10</text><text x="778" y="242">N7</text><text x="1016" y="284">N11'</text><text x="976" y="377">N3</text></g>
<path class="cy" d="M110 170H525M625 170H1010M110 430H455M600 430H940M133 472H432M623 472H922M133 462V482M432 462V482M623 462V482M922 462V482M75 196V412M565 196V412M60 196H90M60 412H90M550 196H580M550 412H580M118 210V400M608 210V400"/>
<path class="cy" d="M110 164V176M130 164V176M150 164V176M210 164V176M280 164V176M345 164V176M400 164V176M420 164V176M495 164V176M625 164V176M650 164V176M700 164V176M840 164V176M880 164V176M905 164V176M980 164V176M130 424V436M160 424V436M210 424V436M260 424V436M330 424V436M385 424V436M410 424V436M625 424V436M680 424V436M750 424V436M830 424V436M880 424V436M915 424V436"/>
<g fill="#ff2020" font-size="19"><text x="215" y="168" textLength="135">2x10 10.2 10 2x10</text><text x="705" y="168" textLength="135">2x10 9.5 10 2x10</text><text x="458" y="158">12.5</text><text x="497" y="166">5.5</text></g>
<g fill="#32d8e6" font-size="18"><text x="120" y="160">5.5 6  3</text><text x="405" y="160">5  6  2.5</text><text x="625" y="168">1.1</text><text x="890" y="156">5 2 9.5</text><text x="985" y="165">5.5</text><text x="115" y="428" textLength="110">3.5 3  8 13</text><text x="225" y="428">20</text><text x="265" y="428">20.5</text><text x="322" y="428">20</text><text x="362" y="428">13 3.5 8</text><text x="605" y="428" textLength="105">5.5 3 8 13</text><text x="715" y="428">30</text><text x="760" y="428">20.5</text><text x="812" y="428">30</text><text x="850" y="428">13 8 5.5 3</text><text x="258" y="467">124.5</text><text x="750" y="467">124.5</text>
<text font-size="19" transform="translate(70 315) rotate(-90)">80</text><text font-size="19" transform="translate(560 315) rotate(-90)">90</text>
<text font-size="17" transform="translate(112 395) rotate(-90)">16.3    7  17.5 15.5 13</text><text font-size="17" transform="translate(600 395) rotate(-90)">16.3    7  17.5 15.5 13</text></g>
<path d="M492 205H530M492 218H530M492 232H530M510 190V245" stroke="#c8c030" stroke-width="4"/>
<path d="M232 235h14v12h-14z" fill="#18d0e0"/><path d="M705 232h14v12h-14z" fill="#18d0e0"/>
<path d="M135 210H490" stroke="#18d0e0" stroke-width="3" stroke-dasharray="3 30"/><path d="M135 400H432" stroke="#18d0e0" stroke-width="3" stroke-dasharray="3 30"/><path d="M645 210H980M630 400H920" stroke="#18d0e0" stroke-width="3" stroke-dasharray="3 30"/>
</g>

<!-- Drawing C plan -->
<g transform="translate(460 710) scale(.38270 .33333)" font-weight="bold">
<path class="gy" d="M230 42H1450M230 32V52M340 32V52M612 32V52M975 32V52M1247 32V52M1450 32V52M230 75H340M230 65V85M340 65V85M1247 62H1442M1247 52V72M1442 52V72M146 495H342M146 485V505M342 485V505M1247 522H1360M1247 512V532M1360 512V532"/>
<g fill="#8a8c8e" font-size="17"><text x="273" y="36">38.4</text><text x="460" y="36">10x10</text><text x="780" y="36">10x10</text><text x="1097" y="36">10x10</text><text x="262" y="72">10x1.66</text><text x="1325" y="58">10x1.8</text><text x="228" y="498" font-size="15">10x5.1</text><text x="1283" y="520" font-size="15">10x5.66</text></g>
<path d="M225 105H1450L1370 472H145Z" fill="none" stroke="#5fd080" stroke-width="4"/>
<g stroke="#fff880" stroke-width="7" fill="none">
<path d="M360 122V468M385 122V468M430 122V468M470 122V468M495 122V468M530 122V468M575 122V468M615 122V468M655 122V468M695 122V468M740 122V468M770 112V468M855 112V468M895 112V468M940 112V468M980 112V468M1005 112V468M1050 112V468M1095 112V468M1135 112V468M1175 112V468M1215 112V468M1250 112V468"/>
<path stroke-width="7.500" d="M225 112H480M221 125H812M215 150H812M209 178H812M203 205H812M195 240H812M190 265H812M182 300H812M172 345H812M168 365H812M162 392H812M153 432H812M146 467H812M820 112H1540M820 128H1540M820 150H1532M820 180H1525M820 228H1515M820 275H1503M820 325H1492M820 352H1485M820 375H1480M820 392H1475M820 432H1467M820 467H1458"/>
<path d="M340 112V468" stroke-width="9"/></g>
<path d="M480 105L520 130H815V100" stroke="#1f2730" stroke-width="5" fill="none"/><path d="M480 105L520 128M515 128H812" stroke="#e88050" stroke-width="3" stroke-dasharray="3 3" fill="none"/><path d="M480 108L525 142" stroke="#fff880" stroke-width="7"/>
<path d="M340 398H810M820 398H1250" stroke="#d88a70" stroke-width="3" stroke-dasharray="3 3"/>
<path d="M820 475H1370M1360 470L1375 445" stroke="#e89070" stroke-width="3" stroke-dasharray="3 3"/>
<path d="M812 102V495M822 102V495M335 104H1450M145 474H1370M812 225L830 195" stroke="#5fd080" stroke-width="3.500" fill="none"/>
<path class="di" d="M120 540H1355M120 530V550M190 530V550M1355 530V550M98 482L122 465H145M207 480L240 532H322M1200 498H1310L1335 478M1427 498L1440 518H1515M18 380V345M18 380H40M1535 380H1510V348M72 75V495M1565 75V495M60 100H80M60 495H80M125 100V158M115 100H135M115 158H135M125 345V402M115 345H135M115 402H135M165 240H215M165 313H225M1350 85H1455M1350 75V95M1450 75V95M1468 95V70M1415 325H1445M1435 392V420M1415 420H1445"/>
<path d="M298 90L190 550M1522 80L1427 500" stroke="#8a60c8" stroke-width="3" stroke-dasharray="20 6 4 6" fill="none"/>
<path d="M170 313H330M138 440H325M1262 226H1440M1262 422H1400" stroke="#fff" stroke-width="3.500" stroke-dasharray="14 4"/>
<g font-size="21" fill="#8de8a4"><text x="148" y="247">N6</text><text x="135" y="320">N4A</text><text x="98" y="448">N7B</text><text x="103" y="475">3x3</text><text x="148" y="540">33</text><text x="245" y="525" font-size="17">?????</text><text x="1195" y="494" font-size="17">???????</text><text x="1437" y="512" font-size="17">?????</text><text x="30" y="350">?</text><text x="1510" y="347">?</text><text x="1395" y="80">50</text><text x="1470" y="75">3x3</text><text x="1462" y="125">7</text><text x="1425" y="318">15</text><text x="1420" y="388">7.5</text><text x="1405" y="430" font-size="18">N7A</text><text x="1442" y="225" font-size="18">N4A</text>
<g fill="#54a86c" font-size="18"><text x="672" y="147">N1</text><text x="672" y="177">N1</text><text x="672" y="222">N1</text><text x="672" y="272">N1</text><text x="672" y="318">N1</text><text x="672" y="352">N1</text><text x="672" y="415">N1</text><text x="672" y="442">N1</text><text x="672" y="463">N1</text><text x="895" y="128">N2</text><text x="895" y="175">N2</text><text x="895" y="220">N2</text><text x="895" y="295">N2</text><text x="890" y="315">N12</text><text x="895" y="350">N2</text><text x="828" y="420">N14</text><text x="828" y="465">N14</text><text x="350" y="243" textLength="95">5   5   5</text><text x="350" y="320" textLength="260">5 5 5 5 5 5 5 5 5 5 5 5</text><text x="350" y="270" textLength="300">5 5 5 5 5 5 5 5 5 5 5</text><text x="700" y="243" textLength="80">5 5 5 5</text><text x="855" y="452" textLength="370">5   5   5   5   5   5   5   5   5</text></g></g>
<g font-size="18" fill="#8de8a4"><text transform="translate(82 492) rotate(-90)">3x6.4  8.11 7.7 10.3 13  8.3 17.5</text><text transform="translate(1570 492) rotate(-90)">3.5  3x12.5 3.5 8.11 20.5 20 13 10.13 8</text></g>
<text transform="translate(75 465) rotate(-90)" font-size="18" fill="#ff2020">3x12.5</text><text transform="translate(1568 465) rotate(-90)" font-size="18" fill="#ff2020">3x12.5</text>
<text x="750" y="537" font-size="18" fill="#ff2020">1579.4</text>
</g>
<g stroke="#ff00ff" stroke-width="2.800" fill="none">
<path d="M549 746L516.600 867M553.500 746L524 867M558 746L532 867M562 746L539.500 867M566 746L547 867M570 746L554 867M574 746L561 867M578 746L569 867M582.500 746L577 867M586.500 746L584.500 867"/>
<path d="M945 746.700L940.700 866.700M953.300 746.700L946.700 866.700M960 746.700L951.700 866.700M966.700 746.700L956.700 866.700M975 746.700L961.700 866.700M983.300 746.700L966.700 866.700M990 746.700L971.700 866.700M998.300 746.700L976.700 866.700M1006.700 746.700L981.700 866.700M1013.300 746.700L985.500 866.700"/>
</g>
<path d="M946 757.500H995M927 832H940" stroke="#ff0000" stroke-width="3.500"/>
<path d="M525 814H585M512 857H584M944 785.500H1000M944 851H1000" stroke="#fff" stroke-width="1.300" stroke-dasharray="5 1.500"/>

<!-- Drawing D: details right -->
<g transform="translate(920 720) scale(.33333)" font-weight="bold">
<path class="di" d="M420 55V470M455 72V445M440 72H470M440 445H470M352 355H380V315M170 50H295M170 40V62M295 40V62M50 30H275M50 20V44M275 20V44M50 490H185M50 480V500M185 480V500M130 470L150 450M258 460L270 488H360M585 370L610 392H665M690 350L745 350M730 350V372" style="stroke:#6fcf88"/>
<path d="M0 8H285" class="gy"/>
<path d="M370 50L260 470" stroke="#8a60c8" stroke-width="3" stroke-dasharray="20 6 4 6"/>
<g class="gr" stroke-width="10">
<path d="M738 52V240H512V68H750M768 118H558V288H540V240M768 118V288H540"/>
<path d="M545 220C540 225 535 232 535 242" stroke-width="14"/>
<path d="M555 240L570 205"/>
<path d="M498 478L590 568H615M665 545V480H712V545"/>
<path d="M115 873H100V745H110"/>
</g>
<path d="M520 367H690L780 408" class="ye" stroke-width="10" stroke-linecap="round"/>
<path d="M235 855L230 745H280L275 855" class="ye" stroke-width="9" stroke-linecap="round"/>
<path class="cy" d="M570 60L600 33H680M578 120L605 147H660M108 738L130 717H185"/>
<path d="M545 522L568 505H635L660 512M500 480V530M500 512H525" stroke="#d8d8d8" stroke-width="2.500" fill="none"/><path d="M217 720H280M217 720L240 745" stroke="#5cb070" stroke-width="2.500" fill="none"/>
<g fill="#ff2020" font-size="19"><text x="612" y="140">7x412</text><text x="612" y="162" fill="#1818ff">401.5</text><text x="567" y="500">40x18</text><text x="565" y="522">146.6</text><text x="680" y="477">30</text><text x="595" y="565">60</text><text x="615" y="385">404</text><text x="620" y="410">185</text><text x="758" y="383">37</text>
<text x="225" y="716">38x10</text><text x="232" y="738">120</text>
<text transform="translate(510 170) rotate(-90)" font-size="18">71.4</text><text transform="translate(555 185) rotate(-90)" font-size="18">71.4</text><text transform="translate(735 195) rotate(-90)" font-size="18">80.4</text><text transform="translate(765 220) rotate(-90)" font-size="18">71.4</text><text transform="translate(535 275) rotate(-90)" font-size="18">10.7</text><text transform="translate(415 430) rotate(-90)" font-size="18">3x12.5</text><text transform="translate(455 280) rotate(-90)" font-size="21">169.5</text></g>
<g fill="#1a1aff" font-size="19"><text x="592" y="55">153.2(N4 5)</text><text x="575" y="82">125.2(N8 6)</text><text x="618" y="118">131.9</text><text x="590" y="232">126.2(N3.5)</text><text x="630" y="303">126.2</text></g>
<g fill="#e4e040" font-size="19"><text x="675" y="42" font-size="18">N4(N4A)</text><text x="662" y="152">N3</text></g>
<g fill="#ff20ff" font-size="19"><text x="128" y="712">45x4x2</text><text x="140" y="734" fill="#ff2020">82.9</text><text x="190" y="725">N10</text><text x="565" y="257">133</text><text x="572" y="22" fill="#8de8a4">14(20)12</text><text transform="translate(94 815) rotate(-90)" font-size="18">30.9</text></g>
<g fill="#8de8a4" font-size="18"><text x="285" y="727">N9</text><text x="603" y="358" font-size="21">145</text><text x="667" y="397">N6</text><text x="710" y="402">35</text><text x="245" y="765">20</text><text x="216" y="806">5</text><text x="264" y="806">5</text><text x="281" y="483" font-size="17">?????</text><text x="0" y="465" font-size="17">?????</text><text x="640" y="510" fill="#e8e8e8">N13</text><text x="258" y="198">N4A</text><text x="233" y="398">N7A</text><text x="355" y="320" font-size="26">?</text><text x="258" y="290">15</text><text x="297" y="98">7</text><text x="245" y="358">7.5</text><text x="168" y="48">50</text><text x="305" y="48" font-size="16">3x3</text></g>
<g font-size="18" fill="#8de8a4"><text transform="translate(412 470) rotate(-90)" textLength="395">3.5   3x12.5   3.5 8.11 20.5 30 13 10.13 8</text></g>
<g fill="#b0ffb8" font-size="20" lengthAdjust="spacingAndGlyphs">
<text x="332" y="598" font-size="22" fill="#a0f0ac">附注:</text>
<text x="362" y="630" font-size="23" fill="#8edc9a">1.</text><text x="400" y="632" textLength="180" lengthAdjust="spacingAndGlyphs">本图尺寸以厘米计。</text>
<text x="362" y="663" font-size="23" fill="#8edc9a">2.</text><text x="402" y="665" textLength="436" lengthAdjust="spacingAndGlyphs">锚端普通钢筋与预应力钢束索孔有干扰时，可</text>
<text x="400" y="698" textLength="422" lengthAdjust="spacingAndGlyphs">暂时将普通钢筋弯起，待预应力筋张拉完毕，</text>
<text x="400" y="730" textLength="95" lengthAdjust="spacingAndGlyphs">再将其复位。</text>
<text x="362" y="760" font-size="23" fill="#8edc9a">3.</text><text x="402" y="763" textLength="293" lengthAdjust="spacingAndGlyphs">锚端、铰角，钝角加强筋另详。</text>
<text x="362" y="795" font-size="23" fill="#8edc9a">4.</text><text x="402" y="797" textLength="478" lengthAdjust="spacingAndGlyphs">相邻空心板13号筋互相搭孔，9号筋相互点焊在一</text>
<text x="400" y="830" textLength="320" lengthAdjust="spacingAndGlyphs">起后再与箍面钢筋网点焊在一起。</text>
<text x="362" y="860" font-size="23" fill="#8edc9a">5.</text><text x="402" y="862" textLength="166" lengthAdjust="spacingAndGlyphs">钢筋明细表另详。</text>
</g>
</g>

<!-- Drawing E: details bottom -->
<g transform="translate(480 890) scale(.33333)" font-weight="bold">
<text x="98" y="80" font-size="34" font-weight="normal" fill="#9cf0b0" textLength="67">????</text>
<path d="M85 89H232" stroke="#e838e0" stroke-width="8"/>
<path d="M97 205A65 62 0 0 1 228 205" fill="none" stroke="#1a1aff" stroke-width="3"/><path d="M78 205H240" stroke="#1a1aff" stroke-width="3"/>
<path d="M98 205V385" class="cy" style="stroke-width:3"/><rect x="80" y="288" width="19" height="15" fill="#ff00ff"/>
<path d="M165 185L182 172" stroke="#ff00ff" stroke-width="14"/>
<path d="M85 383H150V210C150 180 180 180 180 210V383H245" class="gr" stroke-width="11" stroke-linecap="round"/>
<path d="M85 388H115M215 388H245" stroke="#00ff00" stroke-width="13" stroke-linecap="round"/>
<path d="M182 285L205 308H260" class="cy"/>
<g font-size="19" fill="#ff2020"><text x="215" y="300">44x2</text><text x="210" y="325">259.61</text></g>
<g font-size="18" fill="#ff20ff"><text x="262" y="314">N14</text><text x="106" y="410">25</text><text x="212" y="410">25</text></g>
<text x="150" y="140" font-size="19" fill="#ff2020">20.41</text>

<path d="M503 92V78H610L622 84 630 78H770" class="gr" stroke-width="9"/>
<path d="M645 78L672 52H730" class="cy"/><text x="678" y="45" font-size="17" fill="#ff20ff">10x20</text><text x="732" y="60" font-size="18" fill="#ff20ff">N12</text><text x="683" y="68" font-size="17" fill="#ff2020">1616</text><text x="550" y="76" font-size="17" fill="#ff2020">1616</text><text x="492" y="92" font-size="17" fill="#ff20ff">2</text>

<path d="M470 188V175H520L545 187H638L655 175H835V205L760 226 755 216" class="gr" stroke-width="9"/>
<path class="cy" d="M670 175L708 135H800"/><path d="M768 215H835M768 205V265M833 205V265M852 200V230M830 200H858M830 230H858" class="cy"/>
<rect x="785" y="225" width="30" height="14" fill="#1a1aff"/>
<path d="M505 210H555M520 175V235M535 175V235M550 140V200" stroke="#ff2020" stroke-width="2.500"/>
<g font-size="18" fill="#ff2020"><text x="725" y="130">65(5)814</text><text x="710" y="152">194.5(200.5)</text><text x="570" y="181">61.4</text><text x="625" y="180">13 5</text><text x="515" y="235">12.1</text><text x="514" y="165">6 5.1</text></g>
<text x="436" y="170" font-size="17" fill="#1a1aff">3.4(16.0)</text><text x="705" y="194" font-size="18" fill="#1a1aff">45.4</text><text x="775" y="214" font-size="17" fill="#1a1aff">13.7</text>
<text x="805" y="142" font-size="18" fill="#e8e040">N7(N7'A)</text>

<path d="M500 356V343H555L580 358H665L685 343H865V375L795 400 790 388" class="gr" stroke-width="9"/>
<path d="M535 378H590M550 345V400M570 345V400M580 320V370" stroke="#ff2020" stroke-width="2.500"/>
<path d="M738 345L782 305H860" stroke="#6fb88a" stroke-width="2.500" fill="none"/>
<path class="cy" d="M800 412H865M800 408V430M865 408V430M885 370V397H865"/>
<rect x="862" y="368" width="14" height="28" fill="#ff0000"/>
<g font-size="18" fill="#1a1aff"><text x="472" y="338">15.2~16.5</text><text x="600" y="350">4~63.4</text><text x="712" y="362">41.4~42.9</text><text x="525" y="402">12.2~13.8</text><text x="800" y="408">43.8~50.2</text><text x="772" y="298">20x4.4</text><text x="795" y="322">302.9</text><text x="665" y="340">9~12.5</text></g>
<text x="847" y="312" font-size="18" fill="#9cf0b0">N7'B</text>

<path d="M1090 112V97H1335" class="gr" stroke-width="9"/>
<path class="cy" d="M1188 97L1215 122H1275"/><text x="1137" y="91" font-size="17" fill="#ff2020">1616</text><text x="1195" y="115" font-size="17" fill="#ff2020">14x34</text><text x="1228" y="139" font-size="17" fill="#ff2020">1613</text><text x="1277" y="128" font-size="17" fill="#ff20ff">N11</text>

<path d="M1083 205H1178L1190 200 1200 205H1345" class="gr" stroke-width="9"/><circle cx="1085" cy="205" r="7" fill="#00ff00"/>
<path class="cy" d="M1222 203L1250 175H1305"/><text x="1125" y="196" font-size="17" fill="#ff2020">1616</text><text x="1262" y="170" font-size="17" fill="#ff2020">9x6</text><text x="1232" y="192" font-size="17" fill="#ff2020">14121</text><text x="1305" y="184" font-size="18" fill="#ff20ff">N11'</text>

<path d="M1078 288V270H1322V288" class="gr" stroke-width="9"/>
<path class="cy" d="M1175 272L1205 298H1258"/><text x="1118" y="266" font-size="18" fill="#ff2020">124.4</text><text x="1212" y="291" font-size="17" fill="#ff20ff">4x16</text><text x="1208" y="315" font-size="18" fill="#ff2020">140.4</text><text x="1260" y="303" font-size="17" fill="#ff20ff">N8</text>

<path d="M1075 345H1245L1305 385" class="ye" stroke-width="11" stroke-linecap="round"/>
<path d="M1105 348L1130 368H1185M1245 342H1305M1290 342V370" stroke="#6fcf88" stroke-width="2.500" fill="none"/>
<text x="1115" y="335" font-size="17" fill="#9cf0b0">120.4</text><text x="1138" y="362" font-size="18" fill="#ff2020">44.5</text><text x="1133" y="385" font-size="18" fill="#ff2020">163.6</text><text x="1187" y="373" font-size="17" fill="#9cf0b0">N5</text><text x="1312" y="366" font-size="18" fill="#ff2020">37</text><text x="1252" y="372" font-size="17" fill="#9cf0b0">35</text>
</g>

<!-- command history -->
<rect x="316" y="1232" width="116" height="22" rx="2" fill="#5f5f5f"/>
<rect x="316" y="1259" width="210" height="22" rx="2" fill="#5f5f5f"/>
<rect x="316" y="1286" width="140" height="22" rx="2" fill="#5f5f5f"/>
<g font-size="17" fill="#cfcfcf">
<text x="318" y="1249" textLength="110" fill="#c2c2c2" style="font-family:'Liberation Mono','Noto Sans CJK SC',monospace">命令: *取消*</text>
<text x="318" y="1276" textLength="206" fill="#c8c8c8" style="font-family:'Liberation Mono','Noto Sans CJK SC',monospace">命令:   &lt;切换到: 模型&gt;</text>
<text x="318" y="1303" textLength="136" fill="#ececec" style="font-family:'Liberation Mono','Noto Sans CJK SC',monospace">恢复缓存的视口.</text>
</g>
<rect x="254" y="1311" width="57" height="26" fill="#2a313c"/>
<rect x="310" y="1312" width="1077" height="25" fill="#bbbcbe"/>
<path d="M258.500 1315v20M262 1315v20" stroke="#a8adb5" stroke-width="2.500" stroke-dasharray="2 1.500"/>
<path d="M269 1320l8 8M277 1320l-8 8" stroke="#c5cad0" stroke-width="1.800"/>
<path d="M291 1333l6-8c-2-4 1-7 5-6l-3 3 2 2 3-3c1 4-2 7-6 6l-6 8z" fill="#c5cad0"/>
<rect x="315" y="1320" width="15" height="13" fill="#a4a6a9" stroke="#8a8c90"/><path d="M317 1325l3 2-3 2M321 1330h4" stroke="#6f7276" fill="none"/><path d="M333 1324h7l-3.500 4z" fill="#8d8f92"/>
<text x="348" y="1330" font-size="17" font-style="italic" fill="#7f8184" textLength="72">键入命令</text>
<path d="M1376 1325l4-4 4 4z" fill="#555"/>

<!-- bottom status -->
<rect x="0" y="1338" width="1645" height="31" fill="#232a35"/>
<path d="M4 1338H1609" stroke="#4a5260" stroke-width="1"/>
<path d="M16 1338L20 1352Q21 1356 25 1356H60Q64 1356 65 1352L68 1338z" fill="#2e3644"/>
<path d="M68 1338L64 1352Q64 1356 70 1356H122Q126 1356 127 1352L130 1338z" fill="#2e3644"/>
<path d="M140 1338L136 1352Q136 1356 142 1356H150Q154 1356 155 1352L157 1338z" fill="#2e3644"/>
<text x="27" y="1352" font-size="12.500" font-weight="bold" fill="#f0f2f5">模型</text>
<text x="74" y="1352" font-size="12.500" fill="#aab1bb">Layout1</text>
<path d="M146 1342v9M141.500 1346.500h9" stroke="#bfc4cb" stroke-width="2"/>
<g fill="#3b4453"><rect x="1038" y="1340" width="30" height="23"/><rect x="1072" y="1340" width="64" height="23"/><rect x="1139" y="1340" width="102" height="23"/><rect x="1242" y="1340" width="65" height="23"/><rect x="1309" y="1340" width="23" height="23"/><rect x="1336" y="1340" width="104" height="23"/><rect x="1444" y="1340" width="40" height="23"/><rect x="1485.500" y="1340" width="24" height="23"/><rect x="1512" y="1340" width="24" height="23"/><rect x="1539" y="1340" width="49" height="23"/><rect x="1591" y="1340" width="47" height="23"/></g>
<g fill="#5f8fc4"><rect x="1072" y="1341" width="22" height="21"/><rect x="1139" y="1341" width="22" height="21"/><rect x="1268" y="1341" width="22" height="21"/><rect x="1309" y="1341" width="23" height="21"/><rect x="1336" y="1341" width="22" height="21"/></g>
<text x="1040" y="1356" font-size="13" fill="#e6e9ec" textLength="26">模型</text>
<g class="w" transform="translate(0 1351.500)" style="stroke:#e6e8eb">
<path d="M1076-8V8M1083-8V8M1090-8V8M1075-5H1091M1075 0H1091M1075 5H1091"/>
<path d="M1143-8V7H1157M1143 1H1149V7"/>
<circle cx="1172" r="6"/><path d="M1168 6L1180-7M1172 0H1180"/>
<path d="M1206-8L1220 8" style="stroke:#e06060"/><path d="M1213-9V9" style="stroke:#55d070"/><circle cx="1213" cy="0" r="1.500"/>
<path d="M1247 7H1263M1249 7L1262-7"/>
<path d="M1273-6H1285V7H1273z"/><rect x="1271" y="-8" width="3.500" height="3.500"/>
</g>
<g fill="#e6e8eb"><rect x="1100" y="1344" width="2" height="2"/><rect x="1106" y="1344" width="2" height="2"/><rect x="1112" y="1344" width="2" height="2"/><rect x="1100" y="1350" width="2" height="2"/><rect x="1106" y="1350" width="2" height="2"/><rect x="1112" y="1350" width="2" height="2"/><rect x="1100" y="1356" width="2" height="2"/><rect x="1106" y="1356" width="2" height="2"/><rect x="1112" y="1356" width="2" height="2"/>
<rect x="1312" y="1343" width="17" height="3"/><rect x="1312" y="1349" width="12" height="3"/><rect x="1312" y="1355" width="8" height="3"/></g>
<g><use href="#k" x="1127" y="1351"/><use href="#k" x="1194" y="1351"/><use href="#k" x="1234" y="1351"/><use href="#k" x="1299" y="1351"/><use href="#k" x="1433" y="1351"/><use href="#k" x="1476" y="1351"/></g>
<g fill="#dfe2e6"><path d="M1347 1343l3 8 4 7h-3l-4-5-4 5h-3l4-7z"/><path d="M1371 1343l3 8 4 7h-3l-4-5-4 5h-3l4-7z"/><path d="M1395 1343l3 8 4 7h-3l-4-5-4 5h-3l4-7z"/></g>
<circle cx="1354" cy="1345" r="2" fill="none" stroke="#dfe2e6"/><path d="M1377 1342l-2 4 3-1-2 4" stroke="#dfe2e6" fill="none"/>
<text x="1411" y="1356" font-size="12.500" fill="#cfe0f0">1:1</text>
<circle cx="1455" cy="1351" r="6" fill="none" stroke="#cfd2d6" stroke-width="4"/><circle cx="1455" cy="1351" r="8" fill="none" stroke="#cfd2d6" stroke-width="2" stroke-dasharray="3 3"/>
<path d="M1497 1343v17M1489 1351.500h16" stroke="#e6e8eb" stroke-width="2"/>
<rect x="1516" y="1343" width="6" height="6" fill="none" stroke="#dfe2e6"/><circle cx="1530" cy="1351" r="3.500" fill="none" stroke="#dfe2e6"/><path d="M1520 1360l3-6 3 6z" fill="none" stroke="#dfe2e6"/>
<path d="M1543 1343h10l3 4v6h-13z" fill="#3a7fc0"/><rect x="1543" y="1353" width="7" height="6" class="fo"/><path d="M1550 1356l3 4 5-6" fill="none" stroke="#55c060" stroke-width="2"/>
<path d="M1567 1344h5v8h-5zM1572 1350h9l3 3v7h-17v-8" fill="none" stroke="#e0a870" stroke-width="1.300"/>
<rect x="1596" y="1344" width="15" height="13" fill="none" stroke="#c5cad0"/><path d="M1600 1354l3-3M1608 1347l-3 3" stroke="#c5cad0"/>
<path d="M1619 1344h16M1619 1351h16M1619 1358h16" stroke="#dfe2e6" stroke-width="2.200"/>
</svg>
</body></html>
